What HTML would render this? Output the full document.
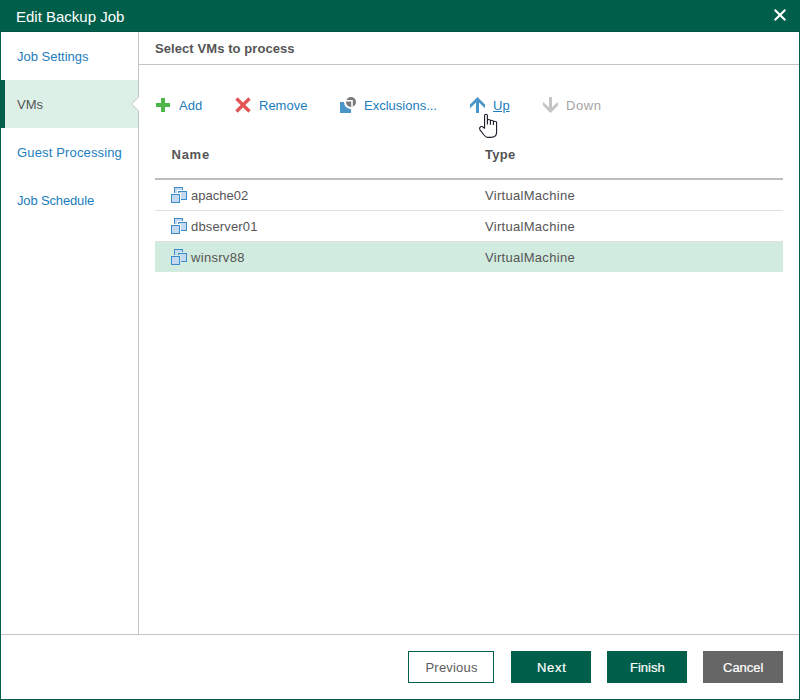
<!DOCTYPE html>
<html><head><meta charset="utf-8">
<style>
*{margin:0;padding:0;box-sizing:border-box}
html,body{width:800px;height:700px;overflow:hidden;background:#fff}
body{font-family:"Liberation Sans",sans-serif;font-size:13px;color:#555;position:relative}
.a{position:absolute}
.t{position:absolute;white-space:nowrap;line-height:20px}
.link{color:#1a7dbd}
</style></head><body>
<!-- frame -->
<div class="a" style="left:0;top:0;width:800px;height:700px;border:1px solid #005f4b;border-top:none"></div>
<!-- title bar -->
<div class="a" style="left:0;top:0;width:800px;height:32px;background:#005f4b"></div>
<div class="a" style="left:0;top:31px;width:800px;height:1px;background:#00553f"></div>
<div class="t" style="left:16px;top:7px;font-size:15px;color:#fff">Edit Backup Job</div>
<svg class="a" style="left:768px;top:4px" width="24" height="24" viewBox="0 0 24 24"><path d="M6.7 5.7L17.3 16.3M17.3 5.7L6.7 16.3" stroke="#fff" stroke-width="2.1" fill="none"/></svg>

<!-- sidebar -->
<div class="a" style="left:138px;top:32px;width:1px;height:603px;background:#c4c4c4"></div>
<div class="a" style="left:1px;top:80px;width:137px;height:48px;background:#ddf0e7"></div>
<div class="a" style="left:1px;top:80px;width:4px;height:48px;background:#005f4b"></div>
<svg class="a" style="left:128px;top:94px" width="12" height="20" viewBox="0 0 12 20"><path d="M10.5 0V3L3.5 10L10.5 17V20H12V0Z" fill="#fff"/><path d="M10.5 0V3L3.5 10L10.5 17V20" stroke="#c4c4c4" stroke-width="1" fill="none"/></svg>
<div class="t link" style="left:17px;top:47px">Job Settings</div>
<div class="t" style="left:17px;top:95px">VMs</div>
<div class="t link" style="left:17px;top:143px;letter-spacing:0.15px">Guest Processing</div>
<div class="t link" style="left:17px;top:191px;letter-spacing:-0.15px">Job Schedule</div>

<!-- header -->
<div class="t" style="left:155px;top:39px;font-weight:bold;letter-spacing:0.08px">Select VMs to process</div>
<div class="a" style="left:139px;top:64px;width:660px;height:1px;background:#c4c4c4"></div>

<!-- toolbar -->
<svg class="a" style="left:156px;top:98px" width="14" height="14"><path d="M5 0H9V5H14V9H9V14H5V9H0V5H5Z" fill="#4cb648"/></svg>
<div class="t link" style="left:179px;top:96px">Add</div>
<svg class="a" style="left:235px;top:97px" width="16" height="16" viewBox="0 0 16 16"><path d="M1.5 1.5L14.5 14.5M14.5 1.5L1.5 14.5" stroke="#e55454" stroke-width="3.3" fill="none"/></svg>
<div class="t link" style="left:259px;top:96px">Remove</div>
<svg class="a" style="left:336px;top:94px" width="24" height="22" viewBox="0 0 24 22">
<path d="M4 8H8A7 7 0 0 0 15 15V19H4Z" fill="#4a96c8"/>
<circle cx="15" cy="8" r="5" fill="#7a7a7a"/>
<path d="M9.5 6.8H16V14" stroke="#fff" stroke-width="1.6" fill="none"/>
</svg>
<div class="t link" style="left:364px;top:96px">Exclusions...</div>
<svg class="a" style="left:464px;top:92px" width="24" height="24" viewBox="0 0 24 24"><path d="M13.5 5L21 12.4V16.2L15 10.4V21H12V10.4L6 16.2V12.4Z" fill="#4a96c8"/></svg>
<div class="t link" style="left:493px;top:96px;text-decoration:underline">Up</div>
<svg class="a" style="left:536px;top:92px" width="24" height="24" viewBox="0 0 24 24"><path d="M14.5 21L22 13.6V9.8L16 15.6V5H13V15.6L7 9.8V13.6Z" fill="#c4c4c4"/></svg>
<div class="t" style="left:566px;top:96px;color:#a4a4a4;letter-spacing:0.6px">Down</div>

<!-- table -->
<div class="t" style="left:171.5px;top:145px;font-weight:bold;letter-spacing:0.75px">Name</div>
<div class="t" style="left:485px;top:145px;font-weight:bold;letter-spacing:0.3px">Type</div>
<div class="a" style="left:155px;top:178px;width:628px;height:2px;background:#bdbdbd"></div>
<div class="a" style="left:155px;top:210px;width:628px;height:1px;background:#e0e0e0"></div>
<div class="a" style="left:155px;top:241px;width:628px;height:1px;background:#e0e0e0"></div>
<div class="a" style="left:155px;top:242px;width:628px;height:30px;background:#d1ebdf"></div>

<div class="t" style="left:191px;top:186px">apache02</div>
<div class="t" style="left:485px;top:186px;letter-spacing:0.3px">VirtualMachine</div>
<div class="t" style="left:191px;top:217px;letter-spacing:0.15px">dbserver01</div>
<div class="t" style="left:485px;top:217px;letter-spacing:0.3px">VirtualMachine</div>
<div class="t" style="left:191px;top:248px;letter-spacing:0.3px">winsrv88</div>
<div class="t" style="left:485px;top:248px;letter-spacing:0.3px">VirtualMachine</div>

<svg class="a" style="left:170px;top:186px" width="18" height="18" viewBox="0 0 18 18"><rect x="3" y="0" width="11" height="11" fill="#fff"/><rect x="4.5" y="1.5" width="8" height="8" fill="#c4d9ef" stroke="#3a8dca" stroke-width="1"/><rect x="7" y="4" width="11" height="11" fill="#fff"/><rect x="8.5" y="5.5" width="8" height="8" fill="#c4d9ef" stroke="#3a8dca" stroke-width="1"/><rect x="0" y="7" width="11" height="11" fill="#fff"/><rect x="1.5" y="8.5" width="8" height="8" fill="#c4d9ef" stroke="#3a8dca" stroke-width="1"/></svg>
<svg class="a" style="left:170px;top:217px" width="18" height="18" viewBox="0 0 18 18"><rect x="3" y="0" width="11" height="11" fill="#fff"/><rect x="4.5" y="1.5" width="8" height="8" fill="#c4d9ef" stroke="#3a8dca" stroke-width="1"/><rect x="7" y="4" width="11" height="11" fill="#fff"/><rect x="8.5" y="5.5" width="8" height="8" fill="#c4d9ef" stroke="#3a8dca" stroke-width="1"/><rect x="0" y="7" width="11" height="11" fill="#fff"/><rect x="1.5" y="8.5" width="8" height="8" fill="#c4d9ef" stroke="#3a8dca" stroke-width="1"/></svg>
<svg class="a" style="left:170px;top:248px" width="18" height="18" viewBox="0 0 18 18"><rect x="3" y="0" width="11" height="11" fill="#d1ebdf"/><rect x="4.5" y="1.5" width="8" height="8" fill="#c4d9ef" stroke="#3a8dca" stroke-width="1"/><rect x="7" y="4" width="11" height="11" fill="#d1ebdf"/><rect x="8.5" y="5.5" width="8" height="8" fill="#c4d9ef" stroke="#3a8dca" stroke-width="1"/><rect x="0" y="7" width="11" height="11" fill="#d1ebdf"/><rect x="1.5" y="8.5" width="8" height="8" fill="#c4d9ef" stroke="#3a8dca" stroke-width="1"/></svg>
<svg class="a" style="left:476px;top:110px" width="24" height="30" viewBox="0 0 24 30"><path d="M8.6 18.2L8.6 5.6A1.4 1.4 0 0 1 11.4 5.6L11.4 10.8A1.5 1.3 0 0 1 14.4 10.8L14.4 11.6A1.5 1.3 0 0 1 17.4 11.6L17.4 12.6A1.6 1.3 0 0 1 20.6 12.6L20.6 22.3Q20.6 27.4 14.6 27.4L11.6 27.4Q10 27.4 8 25L3.8 19.6Q3 18 4.6 16.8Q6 16 7.2 17.2Z" fill="#fff" stroke="#1a1a28" stroke-width="1.1" stroke-linejoin="round"/><path d="M11.4 10.8V14.6M14.4 11.6V14.8M17.4 12.6V15" stroke="#1a1a28" stroke-width="1.1" fill="none"/></svg>
<!-- footer -->
<div class="a" style="left:1px;top:634px;width:798px;height:1px;background:#c4c4c4"></div>
<div class="a" style="left:408px;top:651px;width:86px;height:32px;border:1px solid #005f4b"></div>
<div class="t" style="left:425.5px;top:658px;letter-spacing:0.2px;color:#5c5c5c">Previous</div>
<div class="a" style="left:511px;top:651px;width:80px;height:32px;background:#005f4b"></div>
<div class="t" style="left:537px;top:658px;color:#fff;letter-spacing:0.7px;-webkit-text-stroke:0.2px #fff">Next</div>
<div class="a" style="left:607px;top:651px;width:80px;height:32px;background:#005f4b"></div>
<div class="t" style="left:630px;top:658px;color:#fff;-webkit-text-stroke:0.2px #fff">Finish</div>
<div class="a" style="left:703px;top:651px;width:80px;height:32px;background:#666"></div>
<div class="t" style="left:723px;top:658px;color:#fff;-webkit-text-stroke:0.2px #fff">Cancel</div>
</body></html>
